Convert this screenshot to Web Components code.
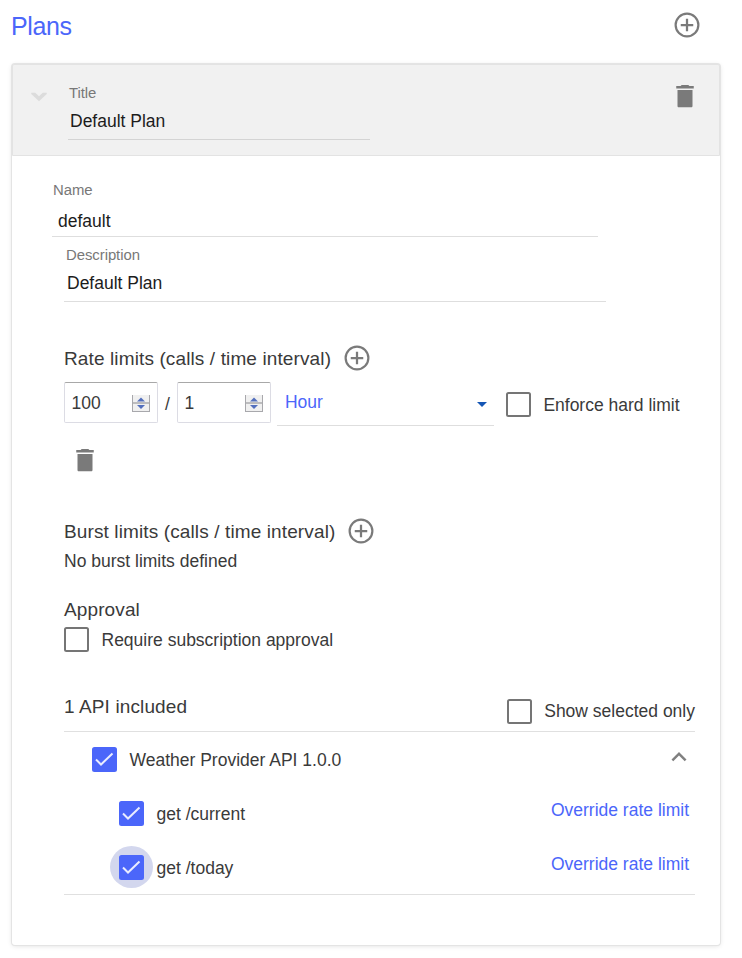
<!DOCTYPE html>
<html lang="en">
<head>
<meta charset="utf-8">
<title>Plans</title>
<style>
  body { margin: 0; background: #fff; }
</style>
</head>
<body>
<plans-page></plans-page>
<script>
const define = (name, html, setup) => customElements.define(name, class extends HTMLElement {
  constructor() {
    super();
    const root = this.attachShadow({ mode: 'open' });
    const t = document.createElement('template');
    t.innerHTML = html;
    root.append(t.content.cloneNode(true));
  }
  connectedCallback() { if (setup) setup(this, this.shadowRoot); }
});

/* Icons on a 24 unit grid */
const ICONS = {
  add: '<path fill="#7a7a7a" d="M11.100 7h1.800v4.100H17v1.800h-4.100V17h-1.800v-4.100H7v-1.800h4.100z"/><circle cx="12" cy="12" r="9.1" fill="none" stroke="#7a7a7a" stroke-width="1.75"/>',
  trash: '<path fill="#7a7a7a" d="M6 20c0 .6.400 1 1 1h10c.6 0 1-.4 1-1V7.200H6V20zM19 4h-3.500l-.8-.8h-5.400l-.8.8H5v2h14V4z"/>',
  up: '<path fill="#808080" d="M12 8l-6 6 1.410 1.410L12 10.830l4.590 4.580L18 14z"/>',
  down: '<path fill="#dcdcdc" d="M5.800 8.600h3.200L12 11.400l3-2.800h3.200v1L12 15.400 5.800 9.600z"/>'
};
define('ui-icon', `<style>:host{display:block;width:30px;height:30px;flex:none}svg{display:block;width:100%;height:100%}</style><svg viewBox="0 0 24 24"></svg>`,
  (el, r) => { r.querySelector('svg').innerHTML = ICONS[el.getAttribute('name')]; });

define('ui-text', `<style>
  :host{display:block;font-size:17.5px;line-height:20px;color:#3a3a3a;white-space:nowrap}
  :host([kind=heading]){font-size:19px;letter-spacing:.12px}
  :host([kind=link]){color:#4b66fa}
  :host([kind=title]){font-size:25px;line-height:30px;color:#4b66fa;letter-spacing:-.4px}
</style><slot></slot>`);

define('ui-field', `<style>
  :host{display:block;box-sizing:border-box;border-bottom:1px solid #dedede}
  .l{font-size:14.9px;line-height:18px;color:#787878;white-space:nowrap;padding-left:var(--label-x,1px);letter-spacing:-.05px}
  .v{font-size:17.5px;line-height:20px;color:#1c1c1c;white-space:nowrap;padding:var(--value-top,9px) 0 0 var(--value-x,2px)}
</style><div class="l"></div><div class="v"><slot></slot></div>`,
  (el, r) => { r.querySelector('.l').textContent = el.getAttribute('label'); });

define('ui-checkbox', `<style>
  :host{display:flex;align-items:flex-start;height:25px;isolation:isolate}
  .b{box-sizing:border-box;width:25px;height:25px;border:2px solid #757575;border-radius:2.500px;flex:none;position:relative;background:#fff}
  svg{display:none;width:25px;height:25px;margin:-2px}
  :host([checked]) .b{border-color:#4b66fa;background:#4b66fa}
  :host([checked]) svg{display:block}
  :host([focused]) .b::before{content:"";position:absolute;z-index:-1;left:-11px;top:-11px;width:43px;height:42px;border-radius:50%;background:#d3d7ee}
  ui-text{padding:var(--label-top,3px) 0 0 12.500px}
</style><span class="b"><svg viewBox="0 0 25 25"><path d="M4 12.500l5 5L20.500 6.500" fill="none" stroke="#e9ecff" stroke-width="2"/></svg></span><ui-text><slot></slot></ui-text>`);

define('ui-number', `<style>
  :host{display:flex;box-sizing:border-box;width:94px;height:41px;border:1px solid #dcdce4;border-top-color:#a8a8a8;border-radius:2px;justify-content:space-between;padding:10px 7px 0 6.500px;background:#fff}
  svg{display:block;width:18px;height:17px;margin-top:2px}
</style><ui-text><slot></slot></ui-text>
<svg viewBox="0 0 18 17" shape-rendering="crispEdges"><rect width="18" height="17" fill="#a8a8ac"/><rect x="1" y="0" width="16" height="7" fill="#f0f0f0"/><rect x="1" y="7" width="16" height="2" fill="#bcbcbe"/><rect x="1" y="9" width="16" height="7" fill="#f0f0f0"/><g shape-rendering="auto" fill="#536fbd"><path d="M5 6.500L9 2.500l4 4z"/><path d="M5 10h8L9 14z"/></g></svg>`);

define('ui-select', `<style>
  :host{display:flex;box-sizing:border-box;width:217px;height:44px;border-bottom:1px solid #dedede;padding:10px 7px 0 8px;justify-content:space-between}
  i{width:0;height:0;border:5.500px solid transparent;border-bottom:0;border-top-color:#1556b5;margin-top:10px}
</style><ui-text kind="link"><slot></slot></ui-text><i></i>`);

define('plan-header', `<style>
  :host{display:flex;box-sizing:border-box;height:92px;background:#f1f1f1;border:1px solid #e3e3e3;border-radius:2px 2px 0 0;padding:0 19px 0 11px}
  .chev{margin-top:17px}
  ui-field{width:302px;height:56px;margin:19px auto 0 14px;border-color:#d4d4d4}
  .del{margin-top:16px}
</style><ui-icon class="chev" name="down"></ui-icon><ui-field label="Title"><slot></slot></ui-field><ui-icon class="del" name="trash"></ui-icon>`);

define('heading-row', `<style>
  :host{display:flex;align-items:center;height:30px}
  ui-text{padding-top:1px}
  ui-icon{margin-left:11px}
</style><ui-text kind="heading"><slot></slot></ui-text><ui-icon name="add"></ui-icon>`);

define('api-row', `<style>
  :host{display:flex;justify-content:space-between;height:54px;padding:0 6px 0 var(--indent,55px);box-sizing:border-box}
  ui-checkbox{margin-top:15px}
  .end{margin-top:14px}
</style><ui-checkbox><slot></slot></ui-checkbox><div class="end"><slot name="end"></slot></div>`,
  (el, r) => { for (const a of ['checked', 'focused']) if (el.hasAttribute(a)) r.querySelector('ui-checkbox').setAttribute(a, ''); });

define('plans-page', `<style>
  :host{display:block;box-sizing:border-box;width:742px;height:958px;padding:10px 22px 0 12px;font-family:"Liberation Sans",Arial,sans-serif;background:#fff}
  .top{display:flex;justify-content:space-between;height:54px;padding:0 18px 0 0;box-sizing:border-box}
  .top ui-text{margin:1px 0 0 -1px}
  .card{height:881px;border-radius:3px;box-shadow:0 0 0 1px #e4e4e4,0 1px 5px rgba(0,0,0,.13);background:#fff}
  .body{padding:25px 25px 0 52px}
  .name{width:546px;height:56px;margin-left:-12px;--value-x:6px;--value-top:12px}
  .desc{width:542px;height:56px;margin-top:9px;--label-x:2px;--value-x:3px;--value-top:9px}
  .rate{margin-top:41px}
  .limits{display:flex;align-items:flex-start;margin-top:9px}
  .limits .slash{margin:12px 7px 0 7px}
  .limits ui-select{margin:0 12px 0 6px}
  .limits ui-checkbox{margin-top:10px}
  .del{margin:19px 0 0 6px}
  .burst{margin-top:41px}
  .none{margin-top:5px}
  .approval{margin-top:29px}
  .req{margin-top:7px}
  .inc{display:flex;justify-content:space-between;margin-top:45px;height:34px;border-bottom:1px solid #e0e0e0}
  .inc ui-checkbox{margin-top:2px;--label-top:2px}
  .apis{border-bottom:1px solid #e0e0e0;height:162px}
  .upi{margin:-4px -5px 0 0}
</style>
<div class="top"><ui-text kind="title">Plans</ui-text><ui-icon name="add"></ui-icon></div>
<div class="card">
  <plan-header>Default Plan</plan-header>
  <div class="body">
    <ui-field class="name" label="Name">default</ui-field>
    <ui-field class="desc" label="Description">Default Plan</ui-field>
    <heading-row class="rate">Rate limits (calls / time interval)</heading-row>
    <div class="limits">
      <ui-number>100</ui-number><ui-text class="slash">/</ui-text><ui-number>1</ui-number>
      <ui-select>Hour</ui-select>
      <ui-checkbox>Enforce hard limit</ui-checkbox>
    </div>
    <ui-icon class="del" name="trash"></ui-icon>
    <heading-row class="burst">Burst limits (calls / time interval)</heading-row>
    <ui-text class="none">No burst limits defined</ui-text>
    <ui-text class="approval" kind="heading">Approval</ui-text>
    <ui-checkbox class="req">Require subscription approval</ui-checkbox>
    <div class="inc"><ui-text kind="heading">1 API included</ui-text><ui-checkbox>Show selected only</ui-checkbox></div>
    <div class="apis">
      <api-row checked style="--indent:28px">Weather Provider API 1.0.0<ui-icon class="upi" slot="end" name="up"></ui-icon></api-row>
      <api-row checked>get /current<ui-text kind="link" slot="end">Override rate limit</ui-text></api-row>
      <api-row checked focused>get /today<ui-text kind="link" slot="end">Override rate limit</ui-text></api-row>
    </div>
  </div>
</div>`);
</script>
</body>
</html>
